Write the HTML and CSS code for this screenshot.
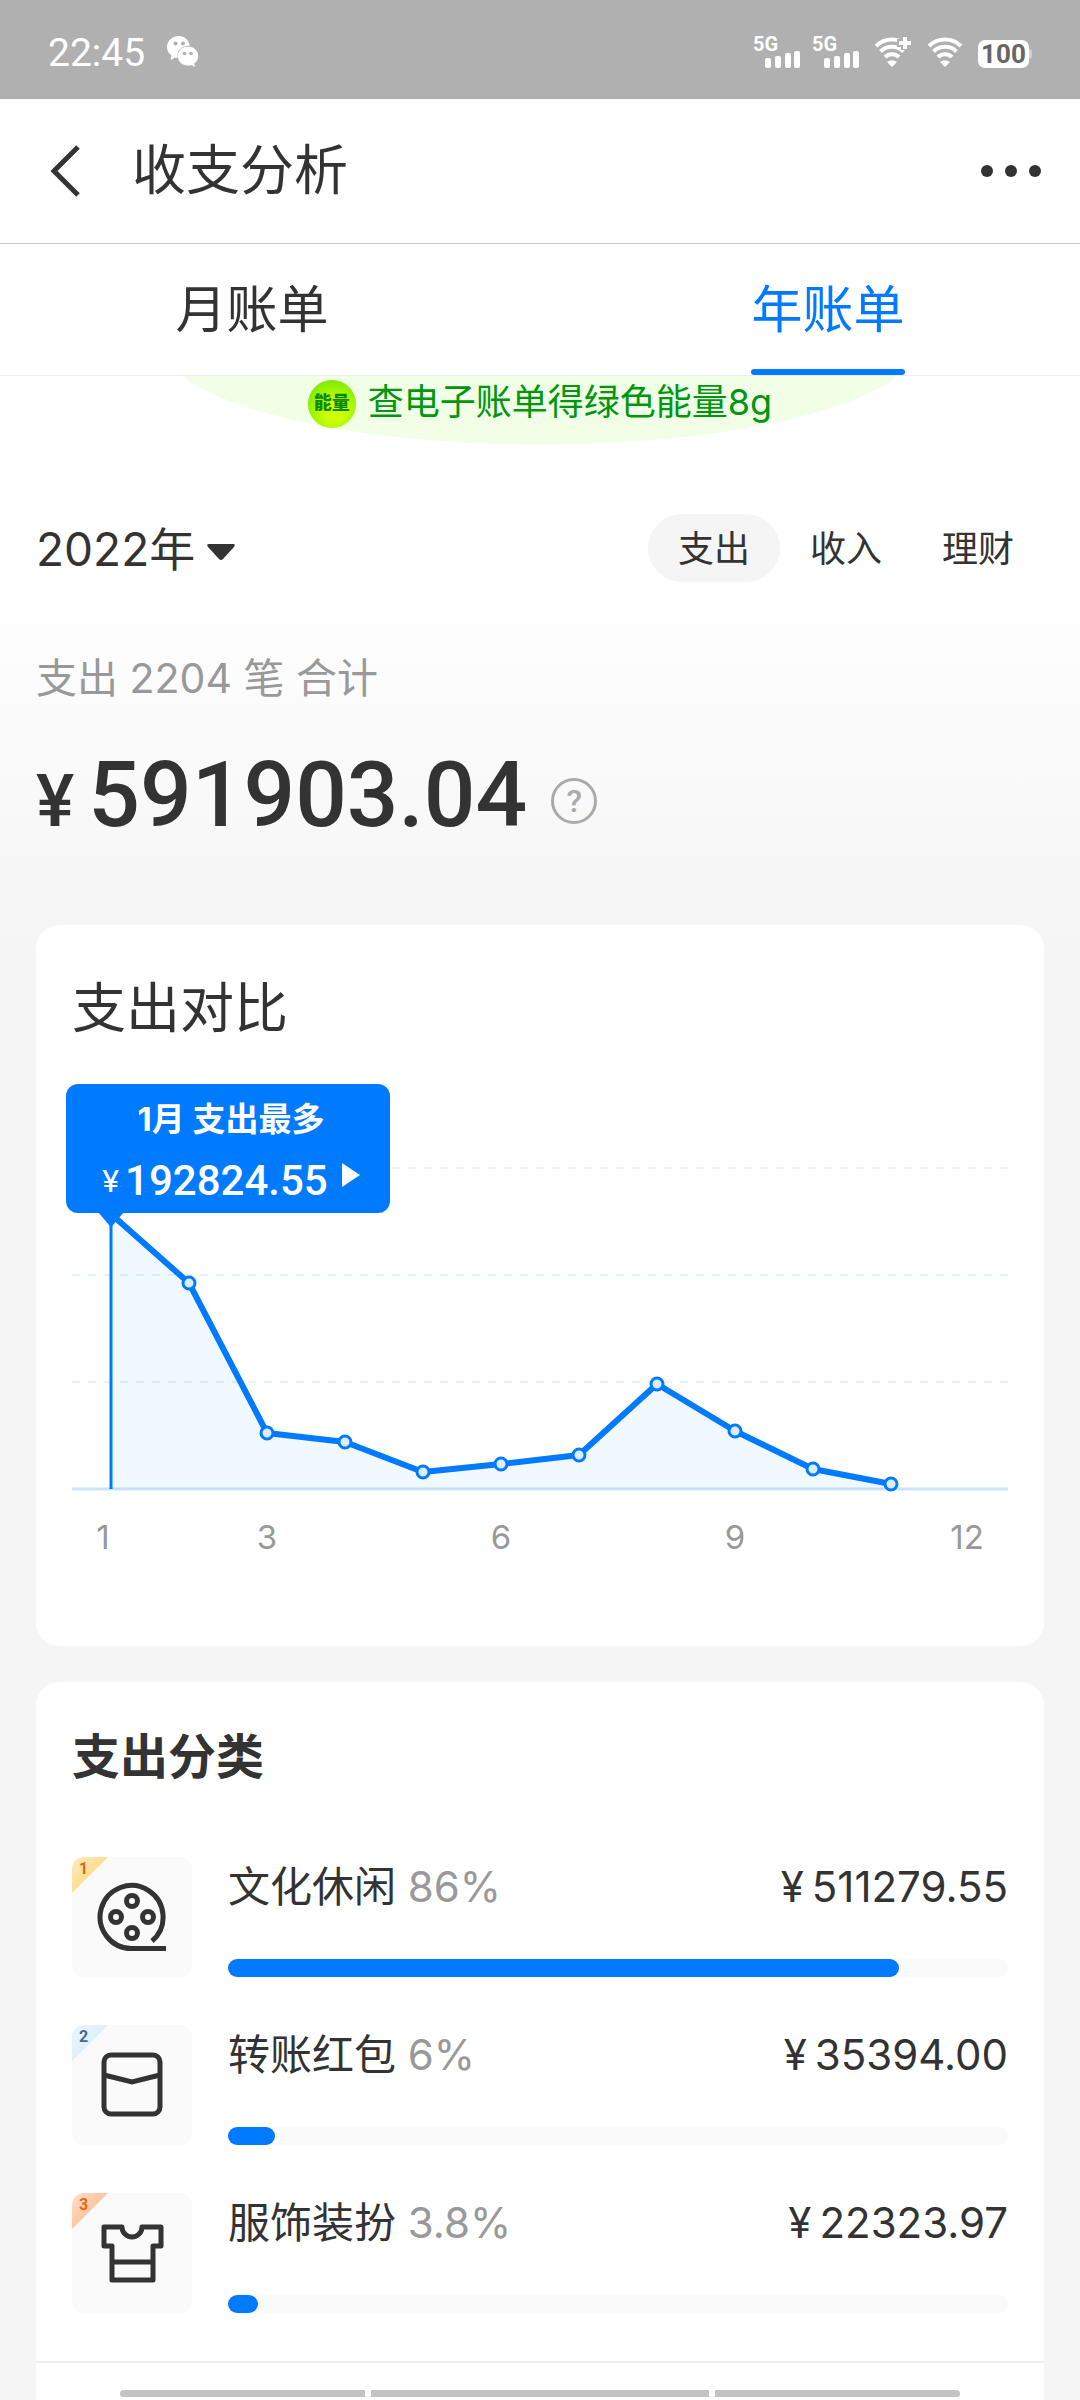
FILE: index.html
```html
<!DOCTYPE html>
<html lang="zh-CN">
<head>
<meta charset="utf-8">
<meta name="viewport" content="width=device-width, initial-scale=1">
<title>收支分析</title>
<link rel="stylesheet" href="styles.css">
</head>
<body>
<div class="status">
  <span class="clock">22:45</span>
  <svg class="wechat" width="32" height="34" viewBox="0 0 32 34" aria-hidden="true">
    <path fill="#fff" d="M12 1C5.400 1 0 5.900 0 12c0 3.400 1.700 6.400 4.500 8.400L3.600 25l4.600-2.600c.8.200 1.600.400 2.500.4C9.400 16 14 10.700 22.800 10.500 21.800 5 17.300 1 12 1z"/>
    <path fill="#fff" d="M21 11.500c-5.700 0-10.200 4.200-10.200 9.500S15.300 30.500 21 30.500c1.300 0 2.500-.2 3.600-.6l3.400 2-.8-3.400c2.500-1.700 4-4.400 4-7.500 0-5.300-4.500-9.500-10.200-9.500z"/>
    <g fill="#b0b0b0"><circle cx="8.500" cy="8.500" r="2"/><circle cx="16" cy="8.500" r="2"/><circle cx="17.500" cy="18.500" r="1.800"/><circle cx="24" cy="18.500" r="1.800"/></g>
  </svg>
  <div class="status-icons">
    <span class="signal"><span class="net">5G</span><svg width="35" height="17" viewBox="0 0 35 17" fill="#fff"><rect x="0" y="7" width="6" height="10" rx="2"/><rect x="10" y="5" width="6" height="12" rx="2"/><rect x="20" y="2" width="6" height="15" rx="2"/><rect x="29" y="0" width="6" height="17" rx="2"/></svg></span>
    <span class="signal"><span class="net">5G</span><svg width="35" height="17" viewBox="0 0 35 17" fill="#fff"><rect x="0" y="7" width="6" height="10" rx="2"/><rect x="10" y="5" width="6" height="12" rx="2"/><rect x="20" y="2" width="6" height="15" rx="2"/><rect x="29" y="0" width="6" height="17" rx="2"/></svg></span>
    <svg width="38" height="32" viewBox="0 0 38 32" fill="none" stroke="#fff" stroke-width="4" aria-hidden="true"><path d="M2 10a23 23 0 0 1 32 0M6.500 15.500a16.500 16.500 0 0 1 23 0M11 21a10 10 0 0 1 14 0"/><path d="M18 31l-5-5q5-3.500 10 0z" fill="#fff" stroke="none"/><path d="M23 7h15M31 0v14" stroke="#b0b0b0" stroke-width="8"/><path d="M25 7h12M31 1v12"/></svg>
    <svg width="36" height="32" viewBox="0 0 36 32" fill="none" stroke="#fff" stroke-width="4" aria-hidden="true"><path d="M2 10a23 23 0 0 1 32 0M6.500 15.500a16.500 16.500 0 0 1 23 0M11 21a10 10 0 0 1 14 0"/><path d="M18 31l-5-5q5-3.500 10 0z" fill="#fff" stroke="none"/></svg>
    <span class="battery">100</span>
  </div>
</div>

<header class="nav">
  <button class="back" aria-label="返回"><svg width="32" height="52" viewBox="0 0 32 52" fill="none" stroke="#333" stroke-width="5"><path d="M28 2L4 26l24 24"/></svg></button>
  <h1>收支分析</h1>
  <button class="more" aria-label="更多"><svg width="62" height="14" viewBox="0 0 62 14" fill="#333"><circle cx="7" cy="7" r="6"/><circle cx="31" cy="7" r="6"/><circle cx="55" cy="7" r="6"/></svg></button>
</header>

<nav class="tabs">
  <button class="tab">月账单</button>
  <button class="tab active">年账单</button>
</nav>

<main>
  <a class="banner" href="#">
    <span class="energy">能量</span>
    <span>查电子账单得绿色能量8g</span>
  </a>

  <section class="summary">
    <div class="filters">
      <button class="year">2022年<svg width="28" height="18" viewBox="0 0 28 18" fill="#333"><path d="M2 1h24q3 0 1 3L16 16q-2 2-4 0L1 4Q-1 1 2 1z"/></svg></button>
      <div class="kinds">
        <button class="kind on">支出</button>
        <button class="kind">收入</button>
        <button class="kind">理财</button>
      </div>
    </div>
    <p class="count">支出 2204 笔 合计</p>
    <div class="total">
      <span class="yen">¥</span><span class="sum">591903.04</span>
      <button class="help" aria-label="说明">?</button>
    </div>
  </section>

  <section class="card compare">
    <h2>支出对比</h2>
    <div class="chart">
      <svg class="plot" viewBox="0 0 936 500" aria-hidden="true">
        <g stroke="#e6f2ff" stroke-width="2" stroke-dasharray="14 14"><path stroke-dasharray="8 8" d="M0 104H936M0 211H936M0 318H936"/></g>
        <path d="M0 425H936" stroke="#cce4ff" stroke-width="3"/>
        <path d="M39 150L117 219 195 369 273 378 351 408 429 400 507 391 585 320 663 367 741 405 819 420V425H39z" fill="#0091ff" fill-opacity=".06"/>
        <path d="M39 146V425" stroke="#007aff" stroke-width="3"/>
        <path d="M39 150L117 219 195 369 273 378 351 408 429 400 507 391 585 320 663 367 741 405 819 420" fill="none" stroke="#007aff" stroke-width="6" stroke-linejoin="round"/>
        <g fill="#d9edff" stroke="#007aff" stroke-width="3"><circle cx="117" cy="219" r="6"/><circle cx="195" cy="369" r="6"/><circle cx="273" cy="378" r="6"/><circle cx="351" cy="408" r="6"/><circle cx="429" cy="400" r="6"/><circle cx="507" cy="391" r="6"/><circle cx="585" cy="320" r="6"/><circle cx="663" cy="367" r="6"/><circle cx="741" cy="405" r="6"/><circle cx="819" cy="420" r="6"/></g>
        <g class="axis"><text x="31" y="485">1</text><text x="195" y="485">3</text><text x="429" y="485">6</text><text x="663" y="485">9</text><text x="895" y="485">12</text></g>
      </svg>
      <button class="tip">
        <span class="tip-title">1月 支出最多</span>
        <span class="tip-value"><span class="tip-yen">¥</span>192824.55<svg width="18" height="26" viewBox="0 0 18 26" fill="#fff"><path d="M0 1l18 12L0 25z"/></svg></span>
        <svg class="tail" width="26" height="16" viewBox="0 0 26 16" fill="#007aff"><path d="M0 0h26L15 13q-2 3-4 0z"/></svg>
      </button>
    </div>
  </section>

  <section class="card ranking">
    <h2>支出分类</h2>
    <ul>
      <li>
        <span class="icon gold"><b>1</b><svg width="72" height="72" viewBox="0 0 72 72" fill="none" stroke="#333" stroke-width="5"><path d="M70 67.500H36A31.500 31.500 0 1 1 56 60"/><circle cx="36" cy="20" r="5.500"/><circle cx="20" cy="36" r="5.500"/><circle cx="52" cy="36" r="5.500"/><circle cx="36" cy="52" r="5.500"/></svg></span>
        <div class="detail"><div class="line"><span class="name">文化休闲 <small>86%</small></span><span class="money"><i>¥</i>511279.55</span></div><div class="bar"><div class="fill" style="width:86%"></div></div></div>
      </li>
      <li>
        <span class="icon silver"><b>2</b><svg width="72" height="72" viewBox="0 0 72 72" fill="none" stroke="#333" stroke-width="5"><rect x="8" y="6" width="56" height="59" rx="7"/><path d="M8 26l28 7 28-7"/></svg></span>
        <div class="detail"><div class="line"><span class="name">转账红包 <small>6%</small></span><span class="money"><i>¥</i>35394.00</span></div><div class="bar"><div class="fill" style="width:6%"></div></div></div>
      </li>
      <li>
        <span class="icon bronze"><b>3</b><svg width="72" height="72" viewBox="0 0 72 72" fill="none" stroke="#333" stroke-width="5" stroke-linejoin="round"><path d="M8 10h18a10 10 0 0 0 20 0h19v19H57v34H16V29H8zM16 45h41"/></svg></span>
        <div class="detail"><div class="line"><span class="name">服饰装扮 <small>3.8%</small></span><span class="money"><i>¥</i>22323.97</span></div><div class="bar"><div class="fill" style="width:3.8%"></div></div></div>
      </li>
    </ul>
  </section>
</main>
<div class="gesture"><span></span><span></span><span></span></div>
</body>
</html>
```

FILE: styles.css
```css
* { box-sizing: border-box; }
body { margin: 0; color: #333; background: #f5f5f5; font-family: Inter, "Noto Sans CJK SC", sans-serif; }
button { margin: 0; padding: 0; border: 0; background: none; color: inherit; font: inherit; }
h1, h2, p, ul { margin: 0; padding: 0; font-weight: 400; }
svg { display: block; flex: none; }

.status { display: flex; align-items: center; height: 99px; padding: 4px 48px 0; background: #b0b0b0; color: #fff; }
.clock { padding-top: 2px; font-family: Roboto, sans-serif; font-size: 39px; line-height: 48px; }
.wechat { margin-left: 22px; }
.status-icons { display: flex; align-items: flex-end; height: 32px; margin-left: auto; gap: 15px; }
.signal { position: relative; width: 47px; height: 32px; padding: 15px 0 0 12px; }
.signal + .signal { margin-left: -3px; }
.net { position: absolute; left: 0; top: -2px; font: 700 20px/20px Roboto, sans-serif; }
.battery { position: relative; width: 51px; height: 28px; margin-right: 3px; border-radius: 7px; background: #fff; color: #666; font: 700 26px/28px Roboto, sans-serif; text-align: center; }
.battery::after { content: ""; position: absolute; left: 51px; top: 9px; width: 3px; height: 10px; border-radius: 0 3px 3px 0; background: #d0d0d0; }

.nav { display: flex; align-items: center; height: 145px; padding: 0 38px 0 50px; background: #fff; border-bottom: 1px solid #c8c8c8; }
.nav h1 { margin-left: 50px; font-size: 54px; line-height: 72px; }
.more { margin-left: auto; }

.tabs { display: grid; grid-template-columns: 1fr 1fr; gap: 72px; height: 132px; background: #fff; border-bottom: 1px solid #eee; }
.tab { position: relative; justify-self: center; padding-bottom: 8px; font-size: 51px; }
.active { color: #007aff; }
.active::after { content: ""; position: absolute; left: 0; right: 0; bottom: 0; height: 6px; border-radius: 3px; background: #007aff; }

main { background: linear-gradient(#fff 0, #fff 190px, #f5f5f5 580px); }
.banner { display: flex; justify-content: center; align-items: center; gap: 12px; height: 69px; padding-bottom: 13px; background: radial-gradient(380px 102px at 50% -33px, #f0ffe6 99%, transparent 100%); color: #00960f; font-size: 36px; line-height: 40px; text-decoration: none; }
.banner span:last-child { padding-bottom: 4px; }
.energy { width: 48px; height: 48px; border-radius: 50%; background: radial-gradient(circle at 55% 65%, #ccff00 0 25%, #8cf000 65%, #78dc00); color: #0a8a00; font-size: 18px; font-weight: 900; line-height: 46px; text-align: center; }

.summary { padding: 69px 36px 0; }
.filters { display: flex; justify-content: space-between; align-items: center; height: 68px; }
.year { display: flex; align-items: center; gap: 12px; padding-bottom: 4px; font-size: 46px; }
.year svg { margin-top: 12px; }
.kinds { display: flex; }
.kind { width: 132px; height: 68px; padding-bottom: 4px; border-radius: 34px; font-size: 36px; }
.on { background: #f5f5f5; }
.count { margin-top: 66px; color: #999; font-size: 41px; line-height: 60px; }
.total { display: flex; align-items: baseline; height: 108px; margin-top: 33px; font-family: Roboto, sans-serif; font-weight: 500; line-height: 108px; }
.yen { font-size: 72px; }
.sum { margin-left: 14px; font-size: 91px; }
.help { align-self: center; width: 46px; height: 46px; margin: 12px 0 0 24px; border: 3px solid #aaa; border-radius: 50%; color: #aaa; font-size: 32px; line-height: 40px; }

.card { margin: 0 36px; padding: 0 36px; border-radius: 24px; background: #fff; }
.card h2 { line-height: 72px; }
.compare { margin-top: 76px; padding: 48px 36px 82px; }
.compare h2 { font-size: 54px; }
.chart { position: relative; margin-top: 19px; }
.plot { width: 100%; }
.axis { fill: #999; font-size: 33px; text-anchor: middle; }
.tip { position: absolute; left: -6px; top: 20px; width: 324px; height: 129px; padding: 8px 0 0 6px; border-radius: 12px; background: #007aff; color: #fff; }
.tip-title { display: block; font-size: 33px; font-weight: 700; line-height: 48px; }
.tip-value { display: flex; justify-content: center; align-items: center; margin-top: 8px; font: 500 42px/60px Roboto, sans-serif; }
.tip-value svg { margin: 0 0 12px 14px; }
.tip-yen { margin-right: 6px; font-size: 32px; font-weight: 400; }
.tail { position: absolute; left: 32px; top: 128px; }

.ranking { margin-top: 36px; padding: 39px 36px 79px; border-radius: 24px 24px 0 0; }
.ranking h2 { font-size: 48px; font-weight: 700; }
.ranking ul { display: flex; flex-direction: column; gap: 48px; margin: 64px -36px 0; padding: 0 36px 48px; border-bottom: 2px solid #eee; list-style: none; }
.ranking li { display: flex; gap: 36px; height: 120px; }
.icon { position: relative; flex: none; display: grid; place-items: center; width: 120px; height: 120px; border-radius: 12px; background: #fafafa; overflow: hidden; }
.icon b { position: absolute; left: 0; top: 0; width: 36px; height: 36px; padding-left: 7px; clip-path: polygon(0 0, 100% 0, 0 100%); font: 700 16px/24px Roboto, sans-serif; }
.gold b { background: linear-gradient(135deg, #ffe9c2, #ffd45e); color: #d2691e; }
.silver b { background: linear-gradient(135deg, #e8f7ff, #d8e9f3); color: #44699c; }
.bronze b { background: linear-gradient(135deg, #ffe0c8, #ffac78); color: #e06a1c; }
.detail { flex: 1; display: flex; flex-direction: column; justify-content: space-between; }
.line { display: flex; justify-content: space-between; font-size: 42px; line-height: 60px; }
.line small { color: #999; font-size: 42px; }
.money i { margin-right: 8px; font-style: normal; }
.bar { height: 18px; border-radius: 9px; background: #fafafa; }
.fill { height: 18px; border-radius: 9px; background: #007aff; }

.gesture { position: fixed; left: 120px; right: 120px; bottom: 3px; display: grid; grid-template-columns: 245fr 338fr 245fr; gap: 6px; height: 7px; border-radius: 4px; overflow: hidden; }
.gesture span { background: #c4c4c4; }
```
